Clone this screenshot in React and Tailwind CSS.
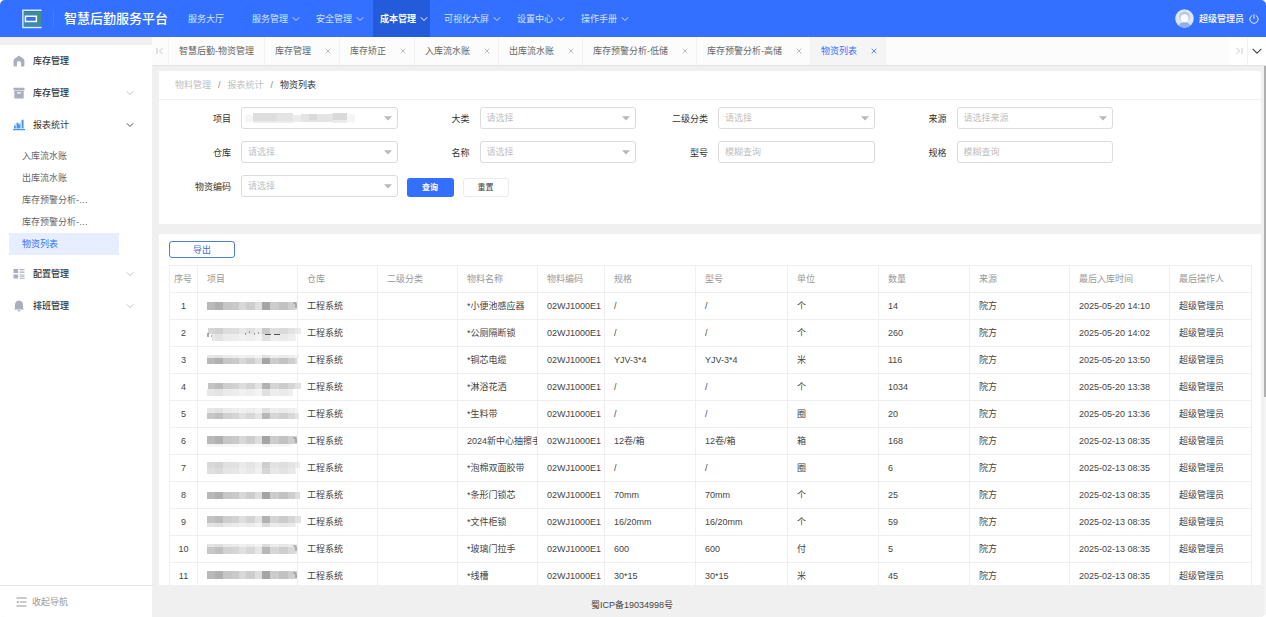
import React from "react";

const NAV = [
  { label: "服务大厅", menu: false },
  { label: "服务管理", menu: true },
  { label: "安全管理", menu: true },
  { label: "成本管理", menu: true, active: true },
  { label: "可视化大屏", menu: true },
  { label: "设置中心", menu: true },
  { label: "操作手册", menu: true },
];

const TABS = [
  { label: "智慧后勤-物资管理", fixed: true },
  { label: "库存管理" },
  { label: "库存矫正" },
  { label: "入库流水账" },
  { label: "出库流水账" },
  { label: "库存预警分析-低储" },
  { label: "库存预警分析-高储" },
  { label: "物资列表", active: true },
];

const SUB_ITEMS = ["入库流水账", "出库流水账", "库存预警分析-…", "库存预警分析-…", "物资列表"];

const COLUMNS = [
  { label: "序号", width: "w-[28px]" },
  { label: "项目", width: "w-[100px]" },
  { label: "仓库", width: "w-[80px]" },
  { label: "二级分类", width: "w-[80px]" },
  { label: "物料名称", width: "w-[80px]" },
  { label: "物料编码", width: "w-[67px]" },
  { label: "规格", width: "w-[91px]" },
  { label: "型号", width: "w-[92px]" },
  { label: "单位", width: "w-[91px]" },
  { label: "数量", width: "w-[91px]" },
  { label: "来源", width: "w-[100px]" },
  { label: "最后入库时间", width: "w-[100px]" },
  { label: "最后操作人", width: "w-[82px]" },
];

// strips: [x, y, width, height, opacity] layers of the masked project name
const ROWS = [
  { name: "*小便池感应器", spec: "/", unit: "个", qty: 14, time: "2025-05-20 14:10", strips: [[0, 6, 90, 8, 1]], tail: true },
  { name: "*公厕隔断锁", spec: "/", unit: "个", qty: 260, time: "2025-05-20 14:02", strips: [[1, 5, 93, 6, 0.6], [5, 11, 84, 7, 0.35]], dots: true },
  { name: "*铜芯电缆", spec: "YJV-3*4", unit: "米", qty: 116, time: "2025-05-20 13:50", strips: [[0, 5, 92, 3, 0.35], [0, 8, 90, 6, 1]] },
  { name: "*淋浴花洒", spec: "/", unit: "个", qty: 1034, time: "2025-05-20 13:38", strips: [[1, 6, 93, 6, 0.85], [0, 12, 86, 7, 0.35]] },
  { name: "*生料带", spec: "/", unit: "圈", qty: 20, time: "2025-05-20 13:36", strips: [[0, 4, 90, 5, 0.35], [0, 9, 92, 6, 0.8]] },
  { name: "2024新中心抽擦手", spec: "12卷/箱", unit: "箱", qty: 168, time: "2025-02-13 08:35", strips: [[0, 5, 90, 8, 1], [0, 13, 85, 3, 0.15]], tail: true },
  { name: "*泡棉双面胶带", spec: "/", unit: "圈", qty: 6, time: "2025-02-13 08:35", strips: [[0, 4, 93, 6, 0.55], [0, 10, 89, 6, 0.45]] },
  { name: "*条形门锁芯", spec: "70mm", unit: "个", qty: 25, time: "2025-02-13 08:35", strips: [[0, 7, 93, 7, 1]] },
  { name: "*文件柜锁", spec: "16/20mm", unit: "个", qty: 59, time: "2025-02-13 08:35", strips: [[0, 4, 94, 7, 0.85], [0, 11, 89, 4, 0.4]] },
  { name: "*玻璃门拉手", spec: "600", unit: "付", qty: 5, time: "2025-02-13 08:35", strips: [[0, 5, 90, 3, 0.4], [0, 8, 90, 7, 0.8]], tail: true },
  { name: "*线槽", spec: "30*15", unit: "米", qty: 45, time: "2025-02-13 08:35", strips: [[0, 5, 90, 8, 1]], tail: true },
];

const BLOCKS = [
  [0, 8, "#b9b9b9"], [8, 8, "#b0b0b0"], [16, 9, "#c6c6c6"], [25, 7, "#cacaca"],
  [32, 7, "#d8d8d8"], [39, 9, "#cdcdcd"], [48, 7, "#dedede"], [55, 8, "#a5a5a5"],
  [63, 9, "#cccccc"], [72, 9, "#c2c2c2"], [81, 7, "#cecece"], [88, 7, "#dddddd"],
];

function Mosaic({ row }) {
  return (
    <svg width="95" height="20" viewBox="0 0 95 20" className="block" aria-hidden="true">
      {row.strips.map(([x, y, w, h, o], i) =>
        BLOCKS.filter((b) => b[0] < x + w).map(([bx, bw, fill]) => {
          const left = Math.max(bx, x);
          const right = Math.min(bx + bw, x + w);
          return <rect key={i + "-" + bx} x={left} y={y} width={right - left} height={h} fill={fill} opacity={o} />;
        })
      )}
      {row.tail && <path d="M86.500 7h3M89 8v4" stroke="#777" strokeWidth="1" />}
      {row.dots && (
        <g stroke="#555" strokeWidth="1">
          <path d="M1 10v4M4 13h1" />
          <path d="M38 11h1M42 9h1M47 11h1M51 10h1M58 11.5h6M67 11.5h6" />
        </g>
      )}
    </svg>
  );
}

function Chevron({ className }) {
  return (
    <svg viewBox="0 0 8 8" width="8" height="8" className={className} fill="none" stroke="currentColor" aria-hidden="true">
      <path d="M0.8 2.3 4 5.5 7.2 2.3" />
    </svg>
  );
}

function Cross() {
  return (
    <svg viewBox="0 0 6 6" width="6" height="6" fill="none" stroke="currentColor" strokeWidth="0.8" aria-hidden="true">
      <path d="M0.7 0.7 5.3 5.3M5.3 0.7 0.7 5.3" />
    </svg>
  );
}

const icons = {
  home: (
    <path fill="#abafbd" d="M6 0.6 1.2 4Q0.6 4.500 0.6 5.200v5.200q0 1 1 1h2.300V8a2.100 2.100 0 0 1 4.200 0v3.400h2.300q1 0 1-1V5.200q0-0.700-0.600-1.200Z" />
  ),
  box: (
    <g fill="#abafbd">
      <path d="M0.5 0.8h11v2.6h-11z" />
      <path fillRule="evenodd" d="M1.3 4h9.4v7.4H1.3zM4 5.2v1.2h4V5.2z" />
    </g>
  ),
  chart: (
    <g fill="#4a97e6">
      <path d="M0 10h12v1.2H0z" />
      <path d="M1 6.6h1.8V9.4H1zM3.5 4h1.8l1 2 1.2-2v5.4h-4zM8.6 0.8h2v8.6h-2z" />
      <path d="M1 6.2 4.4 3.4l2 2.2L9.4 1" fill="none" stroke="#8fc0f2" strokeWidth="0.7" />
    </g>
  ),
  config: (
    <g fill="#abafbd">
      <path d="M0.5 1h4.6v4H0.5zM0.5 6.6h4.6v4H0.5z" />
      <path d="M6.6 1h4.9v1H6.6zM6.6 2.7h4.9v0.8H6.6zM6.6 4.2h4.9v0.9H6.6zM6.6 6.6h4.9v1H6.6zM6.6 8.2h4.9v0.8H6.6zM6.6 9.7h4.9v1H6.6z" />
    </g>
  ),
  bell: (
    <path fill="#abafbd" d="M6 0.4C3.4 0.6 2 2.4 2 4.8v3.4L0.9 9.6h10.2L10 8.2V4.8C10 2.4 8.6 0.6 6 0.4ZM4.4 10.3h3.2a1.6 1.3 0 0 1-3.2 0Z" />
  ),
};

function MenuItem({ icon, label, chevron, open }) {
  return (
    <button type="button" className="flex h-8 w-full items-center pl-[13px] pr-[18px] text-left">
      <svg viewBox="0 0 12 12" width="12" height="12" aria-hidden="true">{icons[icon]}</svg>
      <span className={"ml-2 flex-1 " + (open ? "text-[#333]" : "font-medium text-[#333]")}>{label}</span>
      {chevron && <Chevron className={open ? "text-[#555]" : "text-[#c4c4c4]"} />}
    </button>
  );
}

function Field({ id, label, type = "select", placeholder = "请选择", masked }) {
  const box = "h-[22px] w-full rounded-[3px] border border-[#dcdcdc] bg-white px-[6px] text-[9px] text-[#bfbfbf] outline-none placeholder:text-[#bfbfbf]";
  return (
    <div className="grid grid-cols-[72px_minmax(0,1fr)] items-center gap-[10px]">
      <label htmlFor={id} className="pt-[2px] text-right text-[#333]">{label}</label>
      {type === "input" ? (
        <input id={id} placeholder={placeholder} className={box} />
      ) : (
        <div className="relative">
          <select id={id} className={box + " appearance-none"}>
            <option>{masked ? "" : placeholder}</option>
          </select>
          <svg viewBox="0 0 8 5" width="8" height="5" className="pointer-events-none absolute right-[6px] top-[9px]" aria-hidden="true">
            <path d="M0 0.2h8L4 4.6Z" fill="#b8b8b8" />
          </svg>
          {masked && (
            <svg viewBox="0 0 112 12" width="112" height="12" className="pointer-events-none absolute left-[4px] top-[5px]" aria-hidden="true">
              <path fill="#f5f5f5" d="M0 3h8v7H0zM102 2h8v8h-8z" />
              <path fill="#dedede" d="M8 1h24v8H8z" />
              <path fill="#e4e4e4" d="M32 1h16v8H32zM56 2h32v8H56z" />
              <path fill="#ececec" d="M8 9h40v2H8zM48 3h8v7h-8z" />
              <path fill="#d9d9d9" d="M64 2h8v6h-8zM88 1h14v7H88z" />
              <path fill="#ebebeb" d="M88 8h14v3H88z" />
            </svg>
          )}
        </div>
      )}
    </div>
  );
}

function Header() {
  return (
    <header className="flex h-[37px] shrink-0 items-center bg-[#3370ff] text-white">
      <svg viewBox="0 0 20 20" width="20" height="20" className="ml-[22px]" role="img" aria-label="平台标志">
        <path d="M2 3h17.200v13.600H2v-2.800h13.200V6.600H2z" fill="#3f9187" />
        <path d="M19.500 1.300H0.900v17.200h18.600" fill="none" stroke="#d9f0ff" strokeWidth="1.400" />
        <path d="M3.400 7.300h11v5.200h-11z" fill="none" stroke="#fff" strokeWidth="1.500" />
      </svg>
      <span className="ml-[11px] h-4 w-px bg-[#477eff]" />
      <h1 className="ml-[10px] pt-px text-[13px] leading-5 font-medium">智慧后勤服务平台</h1>
      <nav className="ml-[13px] flex h-full gap-[7px]">
        {NAV.map((n) => (
          <a
            key={n.label}
            href="#"
            className={
              "flex h-full items-center gap-[4px] pl-[7px] " +
              (n.menu ? "pr-[2px] " : "pr-[14px] ") +
              (n.active ? "bg-[#245bdb] font-bold text-white" : "text-[#d6e2ff]")
            }
          >
            {n.label}
            {n.menu && <Chevron />}
          </a>
        ))}
      </nav>
      <div className="ml-auto flex items-center pr-[7px]">
        <svg viewBox="0 0 19 19" width="19" height="19" aria-hidden="true">
          <circle cx="9.5" cy="9.5" r="9.3" fill="#dbe8fb" />
          <circle cx="9.5" cy="8" r="5.4" fill="#b4c6e6" />
          <path d="M3.6 16.6a6.2 5 0 0 1 11.8 0 9.3 9.3 0 0 1-11.8 0Z" fill="#8fb0e8" />
          <circle cx="9.5" cy="9.3" r="4" fill="#fff" />
        </svg>
        <span className="ml-[5px] font-medium">超级管理员</span>
        <button type="button" aria-label="退出登录" className="ml-[5px]">
          <svg viewBox="0 0 10 10" width="10" height="10" fill="none" stroke="#fff" strokeWidth="0.9" className="block" aria-hidden="true">
            <path d="M3.2 1.5a4.1 4.1 0 1 0 3.6 0M5 0.3v4.5" />
          </svg>
        </button>
      </div>
    </header>
  );
}

function Sidebar() {
  return (
    <aside className="flex w-[152px] shrink-0 flex-col border-t-8 border-[#f0f0f0] bg-white">
      <MenuItem icon="home" label="库存管理" />
      <MenuItem icon="box" label="库存管理" chevron />
      <MenuItem icon="chart" label="报表统计" chevron open />
      <ul className="mt-[4px] mb-[3px] pl-[9px] pr-[33px]">
        {SUB_ITEMS.map((s, i) => (
          <li key={i}>
            <a
              href="#"
              className={
                "flex h-[22px] items-center pl-[13px] " +
                (i === 4 ? "bg-[#e6eeff] text-[#3370ff]" : "text-[#666]")
              }
            >
              {s}
            </a>
          </li>
        ))}
      </ul>
      <MenuItem icon="config" label="配置管理" chevron />
      <MenuItem icon="bell" label="排班管理" chevron />
      <button type="button" className="mt-auto flex h-8 items-center gap-[5px] border-t border-[#e4e4e4] pl-4 text-[#999]">
        <svg viewBox="0 0 11 10" width="11" height="10" fill="none" stroke="#888" strokeWidth="0.9" aria-hidden="true">
          <path d="M0.5 1h10M4 5h6.5M0.5 9h10" />
          <path d="M2.4 3.6 0.6 5l1.8 1.4Z" fill="#888" stroke="none" />
        </svg>
        收起导航
      </button>
    </aside>
  );
}

function TabBar() {
  return (
    <div className="flex h-[29px] shrink-0 border-b border-[#e2e2e2] bg-[#fcfcfc] text-[#666]">
      <button type="button" aria-label="向左滚动" className="flex w-[17px] items-center justify-center border-r border-[#f4f4f4] text-[#c8c8c8]">
        <svg viewBox="0 0 8 8" width="8" height="8" fill="none" stroke="currentColor" aria-hidden="true">
          <path d="M1 1v6M6.5 1 3.5 4l3 3" />
        </svg>
      </button>
      {TABS.map((t) => (
        <div
          key={t.label}
          className={
            "flex items-center gap-[14px] border-r border-[#f2f2f2] pl-[10px] " +
            (t.fixed ? "pr-[10px] " : "pr-[8px] ") +
            (t.active ? "bg-[#f5f5f5] text-[#3370ff]" : "")
          }
        >
          <a href="#">{t.label}</a>
          {!t.fixed && (
            <button type="button" aria-label={"关闭" + t.label} className={t.active ? "text-[#3370ff]" : "text-[#aaa]"}>
              <Cross />
            </button>
          )}
        </div>
      ))}
      <button type="button" aria-label="向右滚动" className="ml-auto flex w-[18px] items-center justify-center border-r border-[#f2f2f2] bg-white text-[#c8c8c8]">
        <svg viewBox="0 0 8 8" width="8" height="8" fill="none" stroke="currentColor" aria-hidden="true">
          <path d="M7 1v6M1.5 1l3 3-3 3" />
        </svg>
      </button>
      <button type="button" aria-label="更多标签" className="flex w-[18px] items-center justify-center bg-white text-[#444]">
        <svg viewBox="0 0 10 10" width="10" height="10" fill="none" stroke="currentColor" strokeWidth="1.1" aria-hidden="true">
          <path d="M0.7 2.8 5 7.1l4.3-4.3" />
        </svg>
      </button>
    </div>
  );
}

function Filters() {
  return (
    <section className="h-[153px] shrink-0 bg-white">
      <nav className="flex h-[29px] items-center gap-[7px] border-b border-[#f0f0f0] px-4 text-[#c0c0c0]" aria-label="面包屑">
        <a href="#">物料管理</a>
        <span className="text-[#888]">/</span>
        <a href="#">报表统计</a>
        <span className="text-[#888]">/</span>
        <span className="text-[#333]">物资列表</span>
      </nav>
      <form className="grid grid-cols-4 gap-y-[12px] pt-[7px] pr-[148px]" onSubmit={(e) => e.preventDefault()}>
        <Field id="project" label="项目" masked />
        <Field id="category" label="大类" />
        <Field id="subcategory" label="二级分类" />
        <Field id="source" label="来源" placeholder="请选择来源" />
        <Field id="warehouse" label="仓库" />
        <Field id="name" label="名称" />
        <Field id="model" label="型号" type="input" placeholder="模糊查询" />
        <Field id="spec" label="规格" type="input" placeholder="模糊查询" />
        <Field id="code" label="物资编码" />
        <div className="flex items-end gap-[9px] pl-[9px] text-[8px]">
          <button type="submit" className="h-[19px] w-[47px] rounded-[3px] bg-[#3370ff] font-bold text-white">查询</button>
          <button type="reset" className="h-[19px] w-[46px] rounded-[3px] border border-[#ebebeb] bg-white text-[#444]">重置</button>
        </div>
      </form>
    </section>
  );
}

function Materials() {
  const cell = "h-[27px] overflow-hidden border border-[#efefef] whitespace-nowrap p-0 text-left font-normal ";
  return (
    <section className="mt-[10px] min-h-0 flex-1 overflow-hidden bg-white px-[10px] pt-[7px]">
      <button type="button" className="mb-[7px] flex h-[17px] w-[66px] items-center justify-center rounded-[3px] border border-[#4c7fd6] text-[#3f6fd0]">
        导出
      </button>
      <table className="w-full table-fixed border-collapse">
        <thead>
          <tr className="text-[#999]">
            {COLUMNS.map((c, i) => (
              <th key={c.label} scope="col" className={cell + c.width + (i === 0 ? " pl-[4px]" : " pl-[9px]")}>
                {c.label}
              </th>
            ))}
          </tr>
        </thead>
        <tbody className="text-[#444]">
          {ROWS.map((r, i) => (
            <tr key={r.name}>
              <td className="h-[27px] border border-[#efefef] p-0 text-center">{i + 1}</td>
              <td className="h-[27px] border border-[#efefef] p-0 pl-[9px]">
                <Mosaic row={r} />
              </td>
              <td className={cell + "pl-[9px]"}>工程系统</td>
              <td className={cell} />
              <td className={cell + "pl-[9px]"}>{r.name}</td>
              <td className={cell + "pl-[9px]"}>02WJ1000E1</td>
              <td className={cell + "pl-[9px]"}>{r.spec}</td>
              <td className={cell + "pl-[9px]"}>{r.spec}</td>
              <td className={cell + "pl-[9px]"}>{r.unit}</td>
              <td className={cell + "pl-[9px]"}>{r.qty}</td>
              <td className={cell + "pl-[9px]"}>院方</td>
              <td className={cell + "pl-[9px]"}>{r.time}</td>
              <td className={cell + "pl-[9px]"}>超级管理员</td>
            </tr>
          ))}
        </tbody>
      </table>
    </section>
  );
}

export default function App() {
  return (
    <div className="flex h-screen flex-col overflow-hidden rounded-[5px] bg-[#f0f0f0] font-['Liberation_Sans','Noto_Sans_CJK_SC',sans-serif] text-[9px] leading-[14px]">
      <Header />
      <div className="flex min-h-0 flex-1">
        <Sidebar />
        <div className="flex min-w-0 flex-1 flex-col">
          <TabBar />
          <div className="flex min-h-0 flex-1">
            <div className="flex min-w-0 flex-1 flex-col">
              <main className="flex min-h-0 flex-1 flex-col pt-[5px] pr-[3px] pl-[7px]">
                <Filters />
                <Materials />
              </main>
              <footer className="flex h-8 shrink-0 items-center justify-center pt-[8px] pr-[152px] text-[#444]">
                蜀ICP备19034998号
              </footer>
            </div>
            <div className="w-[2px] shrink-0 bg-[#f4f4f4]">
              <div className="h-3/5 bg-[#b0b0b0]" />
            </div>
          </div>
        </div>
      </div>
    </div>
  );
}
